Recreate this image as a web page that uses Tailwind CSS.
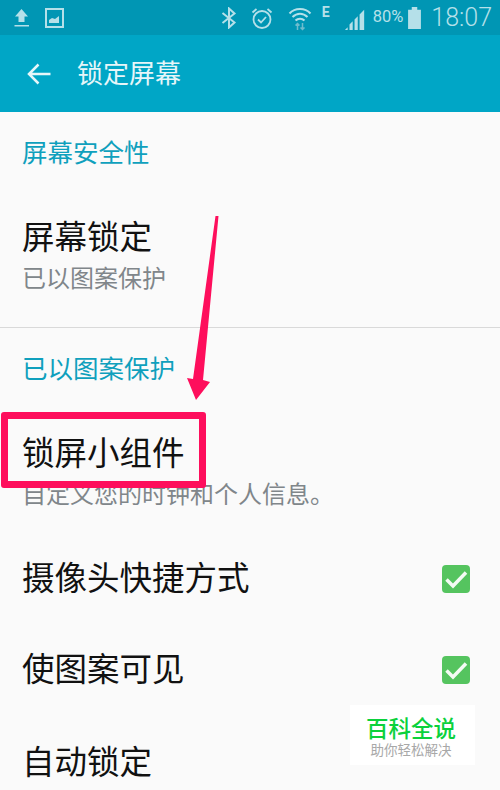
<!DOCTYPE html>
<html lang="zh-CN">
  <head>
    <meta charset="UTF-8" />
    <title>锁定屏幕</title>
    <script src="https://cdn.jsdelivr.net/npm/@tailwindcss/browser@4"></script>
  </head>
  <body class="bg-[#fafafa]">
    <div class="relative w-[500px] h-[790px] overflow-hidden bg-[#fafafa] font-['Roboto','Noto_Sans_CJK_SC',sans-serif]">
      <!-- status bar -->
      <div class="h-[35px] bg-[#0096b4] flex items-center text-[#b5e0e9]">
        <div class="flex items-center gap-[15px] pl-[13px]">
          <svg class="w-[17px] h-[20px]" viewBox="0 0 17 20" fill="currentColor"><path d="M8.500 1 15 8.500h-3.500V14h-6V8.500H2zM1.500 17h14.500v1.500H1.500z" /></svg>
          <svg class="w-[19px] h-[20px]" viewBox="0 0 19 20" fill="none" stroke="currentColor" stroke-width="2"><rect x="1" y="1" width="17" height="18" /><path d="M4 15v-3l3-2 3 1 4-3v7z" fill="currentColor" stroke="none" /></svg>
        </div>
        <div class="ml-auto flex items-center pr-[8px]">
          <svg class="w-[16px] h-[22px] mr-[13px]" viewBox="0 0 16 22" fill="none" stroke="currentColor" stroke-width="2"><path d="M1.500 6 13.500 15.500 8 20.500V1.500L13.500 6.500 1.500 16" /></svg>
          <svg class="w-[24px] h-[24px] mr-[14px]" viewBox="0 0 24 24" fill="none" stroke="currentColor" stroke-width="1.800"><circle cx="12" cy="13.500" r="8.500" /><path d="M8 13.500l3 3 5-5.500M2.500 6.500 6.500 3M21.500 6.500 17.500 3" /></svg>
          <svg class="w-[24px] h-[26px] mr-[10px]" viewBox="0 0 24 26" fill="none" stroke="currentColor" stroke-width="2"><path d="M1.500 8.500C7 2.500 17 2.500 22.500 8.500M4.500 12C9 7.500 15 7.500 19.500 12M7.500 15.500C10 13 14 13 16.500 15.500" /><path d="M9.500 25v-6M7.500 20.500l2-2 2 2M14.500 18v6M12.500 22.500l2 2 2-2" stroke="#6fbccd" stroke-width="1.500" /></svg>
          <span class="w-[22px] -mt-[11px] text-[14px] font-bold leading-none">E</span>
          <svg class="w-[22px] h-[22px] mr-[7px] mt-[2px]" viewBox="0 0 22 24" fill="currentColor"><path d="M0 24 3 21v3zM5 24v-6l3.500-3.500V24zM10.500 24V12.500L14 9v15zM16 24V7l5-5v22z" /></svg>
          <span class="text-[16.500px] leading-none mr-[4px]">80%</span>
          <svg class="w-[15px] h-[22px] mr-[9px]" viewBox="0 0 15 24" fill="currentColor"><path d="M4.500 0h6v3h4v21H.5V3h4z" /></svg>
          <span class="text-[25px] leading-none font-light">18:07</span>
        </div>
      </div>

      <!-- toolbar -->
      <div class="h-[77px] bg-[#00a6c6] flex items-center pl-[27px] text-[#e6f6f9]">
        <svg class="w-[24px] h-[24px]" viewBox="0 0 24 24" fill="none" stroke="currentColor" stroke-width="2.500"><path d="M23.500 12H2.500M11.500 2.500 2 12l9.500 9.500" /></svg>
        <h1 class="ml-[26px] text-[26px] leading-none font-normal">锁定屏幕</h1>
      </div>

      <!-- security section -->
      <div class="px-[22px]">
        <div class="h-[84px] flex items-center text-[25.500px] leading-none text-[#0fa0bd]">屏幕安全性</div>
        <div class="mt-[23px] text-[32.500px] leading-[38px] text-[#111]">屏幕锁定</div>
        <div class="mt-[3px] text-[24px] leading-[38px] text-[#80868a]">已以图案保护</div>
      </div>
      <div class="mt-[29px] h-px bg-[#d9d9d9]"></div>

      <!-- pattern section -->
      <div class="px-[22px]">
        <div class="h-[84px] flex items-center text-[25.500px] leading-none text-[#0fa0bd]">已以图案保护</div>
        <div class="mt-[23px] text-[32.500px] leading-[38px] text-[#111]">锁屏小组件</div>
        <div class="mt-[3px] text-[24px] leading-[38px] text-[#80868a]">自定义您的时钟和个人信息。</div>
        <div class="mt-[43px] h-[44px] flex items-center justify-between pr-[8px] text-[32.500px] text-[#111]">
          <span>摄像头快捷方式</span>
          <svg class="w-[28px] h-[28px]" viewBox="0 0 28 28"><rect width="28" height="28" rx="4" fill="#55c45f" /><path d="M4.500 14.500 11 21 24 7.500" fill="none" stroke="#f4fbf4" stroke-width="3.500" /></svg>
        </div>
        <div class="mt-[47px] h-[44px] flex items-center justify-between pr-[8px] text-[32.500px] text-[#111]">
          <span>使图案可见</span>
          <svg class="w-[28px] h-[28px]" viewBox="0 0 28 28"><rect width="28" height="28" rx="4" fill="#55c45f" /><path d="M4.500 14.500 11 21 24 7.500" fill="none" stroke="#f4fbf4" stroke-width="3.500" /></svg>
        </div>
        <div class="mt-[49px] h-[44px] flex items-center text-[32.500px] text-[#111]">自动锁定</div>
      </div>

      <!-- red annotation -->
      <div class="absolute left-[1px] top-[412px] w-[205px] h-[76px] border-[7px] border-[#fe0e5c] rounded-[3px]"></div>
      <svg class="absolute left-[180px] top-[210px] w-[50px] h-[195px]" viewBox="0 0 50 195" fill="#fe0e5c"><path d="M35.500 6 38.500 6 23 170 30 172 16 190 7 168 13 169z" /></svg>

      <!-- watermark -->
      <div class="absolute left-[350px] top-[705px] w-[125px] h-[60px] pt-[5px] pr-[3px] bg-white flex flex-col items-center justify-center">
        <span class="text-[22.500px] leading-[25px] font-medium text-[#0bd13c]">百科全说</span>
        <span class="text-[13.500px] leading-[17px] text-[#a8a8a8]">助你轻松解决</span>
      </div>
    </div>
  </body>
</html>
